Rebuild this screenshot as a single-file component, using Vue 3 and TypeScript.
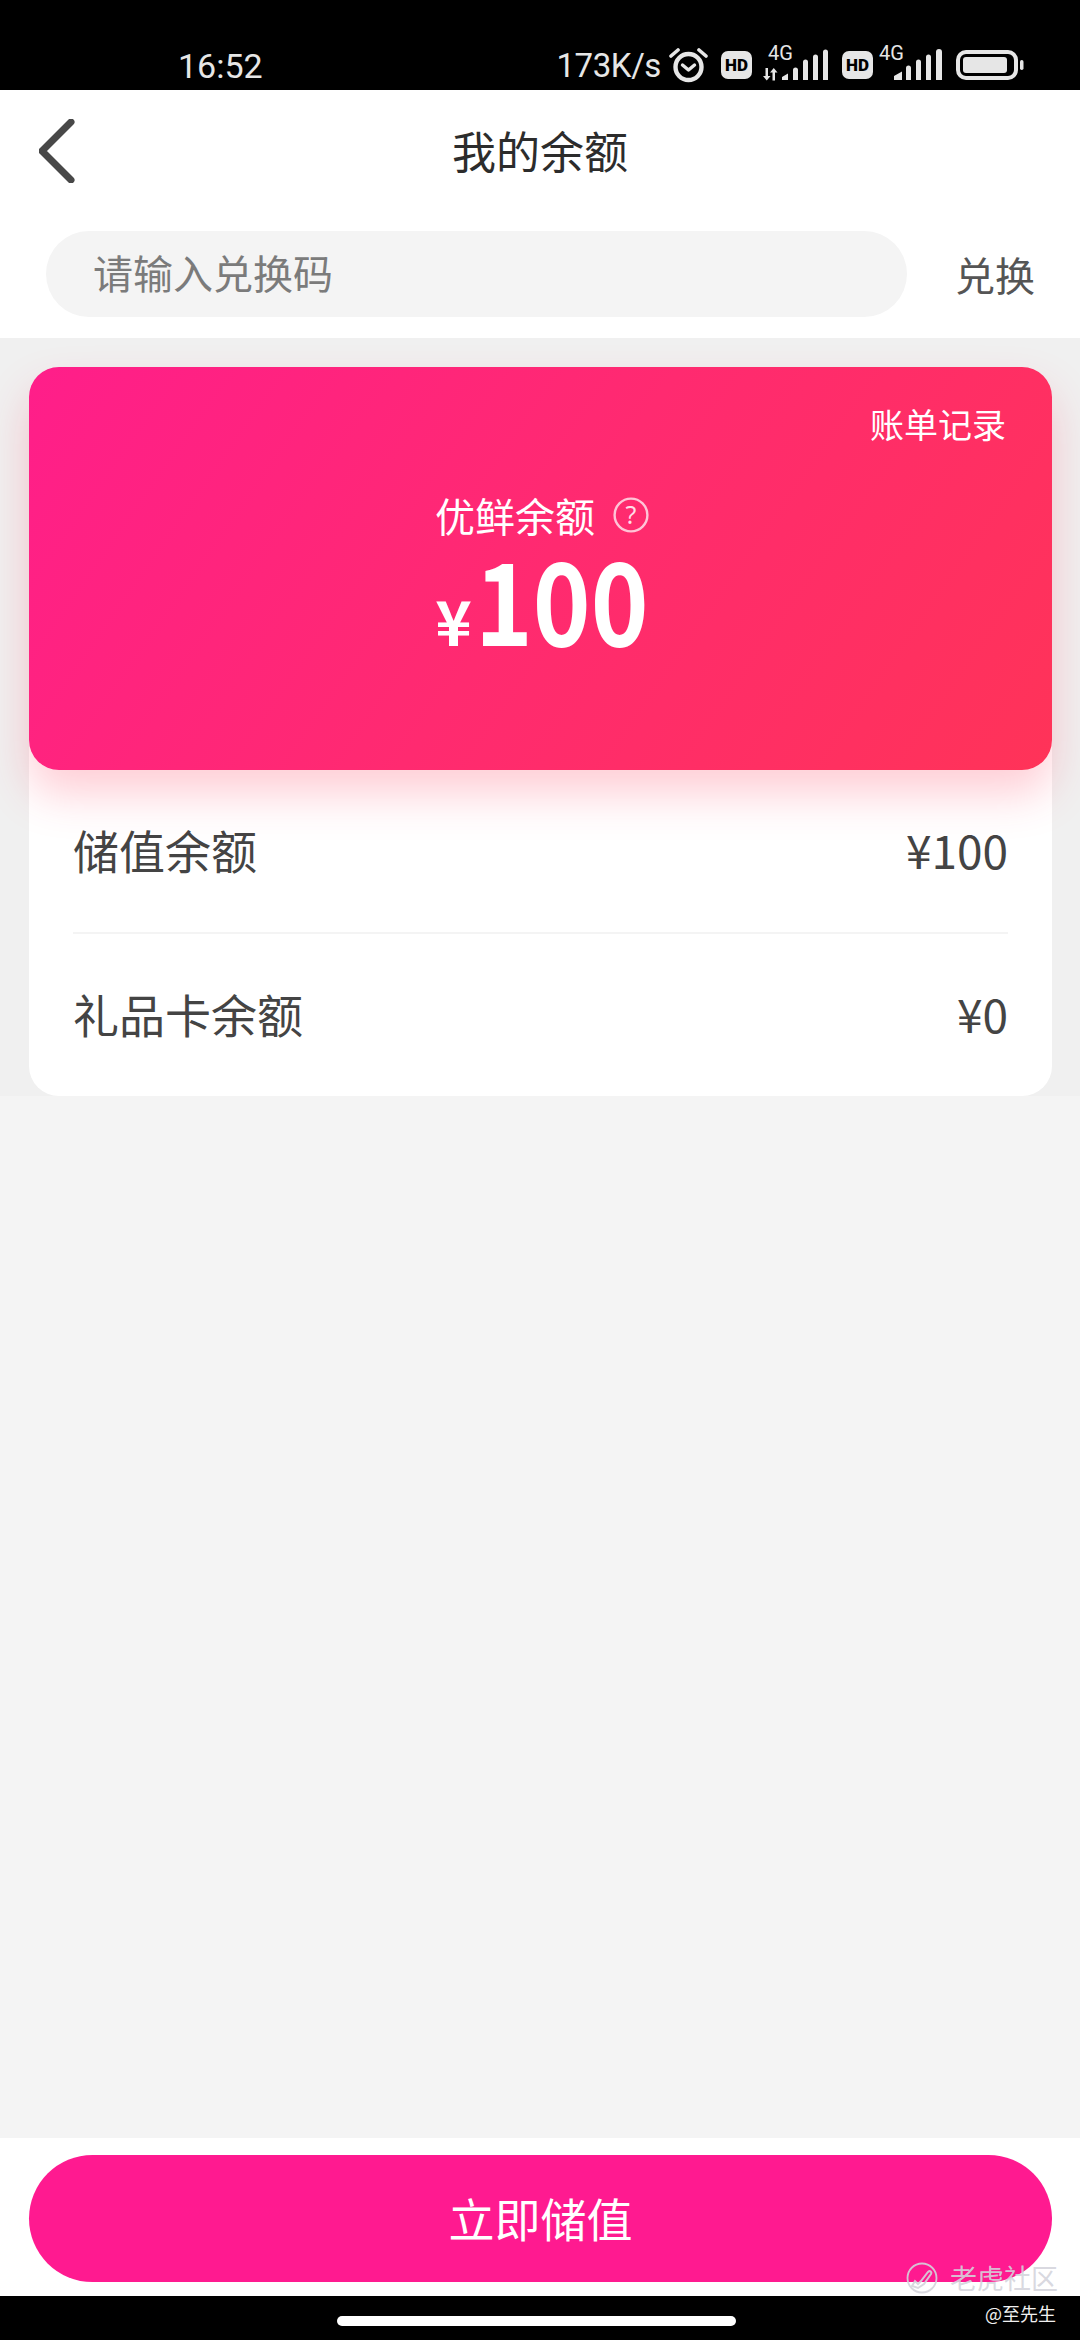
<template>
  <div class="page">
    <div class="status-bar">
      <span class="time">16:52</span>
      <div class="status-right">
        <span class="speed">173K/s</span>
        <svg class="alarm" width="39" height="36" viewBox="0 0 39 36">
          <circle cx="19.5" cy="20" r="13" fill="none" stroke="#e6e6e6" stroke-width="4.400" />
          <path d="M13.5 18l6 5 6-5" fill="none" stroke="#e6e6e6" stroke-width="3.400" stroke-linecap="round" stroke-linejoin="round" />
          <path d="M2 9l7-6M37 9l-7-6" fill="none" stroke="#e6e6e6" stroke-width="3.600" stroke-linecap="round" />
        </svg>
        <span class="hd">HD</span>
        <svg class="signal" width="66" height="40" viewBox="0 -4 66 40">
          <text x="5" y="14" class="net">4G</text>
          <path d="M5 22v8h2.500l-3.750 4.500L0 30h2.500v-8zM9.500 34.500v-8H7l3.750-4.500 3.750 4.500H12v8z" fill="#e6e6e6" />
          <path d="M19 34v-3l6-3.500v6.500zM30 34V24a2.500 2.500 0 0 1 5 0v10zM40 34V16a2.500 2.500 0 0 1 5 0v18zM50 34V11a2.500 2.500 0 0 1 5 0v23zM60 34V6a2.500 2.500 0 0 1 5 0v28z" fill="#e6e6e6" />
        </svg>
        <span class="hd hd-second">HD</span>
        <svg class="signal signal-second" width="64" height="40" viewBox="0 -4 64 40">
          <text x="0" y="14" class="net">4G</text>
          <path d="M15 34v-4l8-4.500v8.500zM27 34V22a2.500 2.500 0 0 1 5 0v12zM37 34V16a2.500 2.500 0 0 1 5 0v18zM47 34V11a2.500 2.500 0 0 1 5 0v23zM57 34V6a3 3 0 0 1 6 0v28z" fill="#e6e6e6" />
        </svg>
        <svg class="battery" width="68" height="30" viewBox="0 0 68 30">
          <rect x="2" y="2" width="58" height="26" rx="8" fill="none" stroke="#e6e6e6" stroke-width="4" />
          <rect x="7" y="7" width="44" height="16" rx="3" fill="#e6e6e6" />
          <rect x="64" y="10" width="3.500" height="10" rx="1.700" fill="#e6e6e6" />
        </svg>
      </div>
    </div>

    <header class="top">
      <div class="nav">
        <svg class="back" width="36" height="64" viewBox="0 0 36 64">
          <path d="M32 3L3 32l29 29" fill="none" stroke="#484848" stroke-width="7" stroke-linecap="round" stroke-linejoin="round" />
        </svg>
        <h1 class="title">我的余额</h1>
      </div>
      <div class="redeem">
        <div class="redeem-input">请输入兑换码</div>
        <span class="redeem-btn">兑换</span>
      </div>
    </header>

    <main class="content">
      <section class="panel">
        <div class="balance-card">
          <div class="bill-link">账单记录</div>
          <div class="balance-label">
            <span>优鲜余额</span>
            <svg width="36" height="36" viewBox="0 0 36 36">
              <circle cx="18" cy="18" r="16.400" fill="none" stroke="#fff" stroke-opacity=".72" stroke-width="2.400" />
              <text x="18" y="27" text-anchor="middle" class="help">?</text>
            </svg>
          </div>
          <div class="balance-amount">
            <span class="yen">¥</span><span class="num">100</span>
          </div>
        </div>
        <div class="details">
          <div v-for="row in rows" :key="row.label" class="row">
            <span>{{ row.label }}</span>
            <span>{{ row.value }}</span>
          </div>
        </div>
      </section>
    </main>

    <footer class="bottom">
      <button class="charge">立即储值</button>
    </footer>

    <div class="nav-bar">
      <div class="home-pill"></div>
    </div>

    <div class="watermark">
      <svg width="32" height="34" viewBox="0 0 32 34">
        <circle cx="16" cy="17" r="14.500" fill="none" stroke="#d4d4dc" stroke-opacity=".9" stroke-width="1.800" />
        <path d="M6 25l3-5 3 3 3-3 7-9c2-2 4 0 3 2l-7 10-6 4z" fill="none" stroke="#d4d4dc" stroke-opacity=".9" stroke-width="2" />
      </svg>
      <span>老虎社区</span>
    </div>
    <div class="author">@至先生</div>
  </div>
</template>

<script setup lang="ts">
interface BalanceRow {
  label: string
  value: string
}

const rows: BalanceRow[] = [
  { label: '储值余额', value: '¥100' },
  { label: '礼品卡余额', value: '¥0' },
]
</script>

<style>
html,
body {
  margin: 0;
  background: #000;
}
</style>

<style scoped>
.page {
  position: relative;
  width: 1080px;
  height: 2340px;
  display: flex;
  flex-direction: column;
  overflow: hidden;
  font-family: "Noto Sans CJK SC", "Noto Sans", sans-serif;
  background: #f4f4f4;
}

.status-bar {
  height: 90px;
  flex: none;
  background: #000;
  color: #e6e6e6;
  display: flex;
  justify-content: space-between;
  padding: 46px 56px 0 178px;
  box-sizing: border-box;
}

.time {
  font-family: Roboto, sans-serif;
  font-size: 34px;
  line-height: 40px;
}

.speed {
  font-family: Roboto, sans-serif;
  font-size: 33px;
  letter-spacing: -0.4px;
  line-height: 40px;
}

.status-right {
  display: flex;
  align-items: flex-start;
  height: 40px;
}

.alarm {
  margin: 1px 0 0 8px;
}

.hd {
  width: 31px;
  height: 28px;
  margin: 5px 0 0 13px;
  border-radius: 7px;
  background: #e6e6e6;
  color: #000;
  font-family: Roboto, sans-serif;
  font-size: 17px;
  font-weight: 900;
  line-height: 28px;
  text-align: center;
}

.signal {
  margin: -4px 0 0 11px;
}

.hd-second {
  margin-left: 13px;
}

.signal-second {
  margin-left: 6px;
}

.battery {
  margin: 4px 0 0 13px;
}

.net {
  font-family: Roboto, sans-serif;
  font-size: 20px;
  fill: #e6e6e6;
}

.top {
  height: 248px;
  flex: none;
  background: #fff;
}

.nav {
  position: relative;
  height: 119px;
  display: flex;
  align-items: center;
  justify-content: center;
}

.back {
  position: absolute;
  left: 39px;
  top: 29px;
}

.title {
  margin: 0;
  font-size: 44px;
  font-weight: 400;
  color: #2c2c2c;
  line-height: 60px;
}

.redeem {
  margin-top: 22px;
  padding: 0 45px 0 46px;
  display: flex;
  align-items: center;
  justify-content: space-between;
}

.redeem-input {
  width: 861px;
  height: 86px;
  box-sizing: border-box;
  padding-left: 47px;
  border-radius: 43px;
  background: #f4f4f4;
  color: #7b7b7b;
  font-size: 40px;
  line-height: 82px;
}

.redeem-btn {
  color: #555;
  font-size: 40px;
  line-height: 86px;
}

.content {
  flex: 1;
  background: #f4f4f4;
}

.panel {
  background: #f0f0f0;
  padding: 29px 28px 0 29px;
  height: 758px;
  box-sizing: border-box;
}

.balance-card {
  position: relative;
  z-index: 1;
  height: 403px;
  box-sizing: border-box;
  padding-top: 34px;
  border-radius: 30px;
  color: #fff;
  background: linear-gradient(125deg, #ff1e8a 0%, #ff2a70 50%, #ff3358 100%);
  box-shadow: 0 24px 44px rgba(255, 60, 90, 0.25);
}

.bill-link {
  text-align: right;
  padding-right: 46px;
  font-size: 34px;
  line-height: 46px;
}

.balance-label {
  margin-top: 42px;
  padding-left: 3px;
  display: flex;
  align-items: center;
  justify-content: center;
  gap: 18px;
  font-size: 40px;
  line-height: 52px;
}

.help {
  font-family: "Noto Sans", sans-serif;
  font-size: 25px;
  fill: #fff;
  fill-opacity: 0.85;
}

.balance-amount {
  display: flex;
  align-items: baseline;
  justify-content: center;
  height: 110px;
  margin-top: 1px;
  line-height: 110px;
  font-weight: 700;
}

.yen {
  font-size: 62px;
  margin-right: 3px;
}

.num {
  display: inline-block;
  font-size: 114px;
  transform: scaleX(0.86);
  transform-origin: left center;
  margin-right: -31px;
}

.details {
  margin-top: -30px;
  height: 356px;
  box-sizing: border-box;
  padding: 30px 44px 0;
  border-radius: 0 0 30px 30px;
  background: #fff;
  color: #444;
  font-size: 46px;
}

.row {
  height: 162px;
  display: flex;
  align-items: center;
  justify-content: space-between;
  padding-bottom: 4px;
  box-sizing: border-box;
}

.row + .row {
  padding-bottom: 2px;
  border-top: 2px solid #f4f4f4;
}

.bottom {
  height: 158px;
  flex: none;
  box-sizing: border-box;
  padding: 17px 28px 0 29px;
  background: #fff;
}

.charge {
  display: block;
  width: 100%;
  height: 127px;
  border: 0;
  padding: 0 0 4px;
  border-radius: 64px;
  background: #ff1a90;
  color: #fff;
  font-family: inherit;
  font-size: 46px;
}

.nav-bar {
  height: 44px;
  flex: none;
  background: #000;
  box-sizing: border-box;
  padding-top: 20px;
}

.home-pill {
  width: 399px;
  height: 10px;
  margin-left: 337px;
  border-radius: 5px;
  background: #fff;
}

.watermark {
  position: absolute;
  left: 906px;
  top: 2261px;
  display: flex;
  align-items: center;
  gap: 12px;
  color: rgba(212, 212, 220, 0.9);
  font-size: 27px;
  line-height: 34px;
}

.author {
  position: absolute;
  left: 985px;
  top: 2300px;
  color: #f0f0f0;
  font-size: 18px;
  line-height: 26px;
}
</style>
